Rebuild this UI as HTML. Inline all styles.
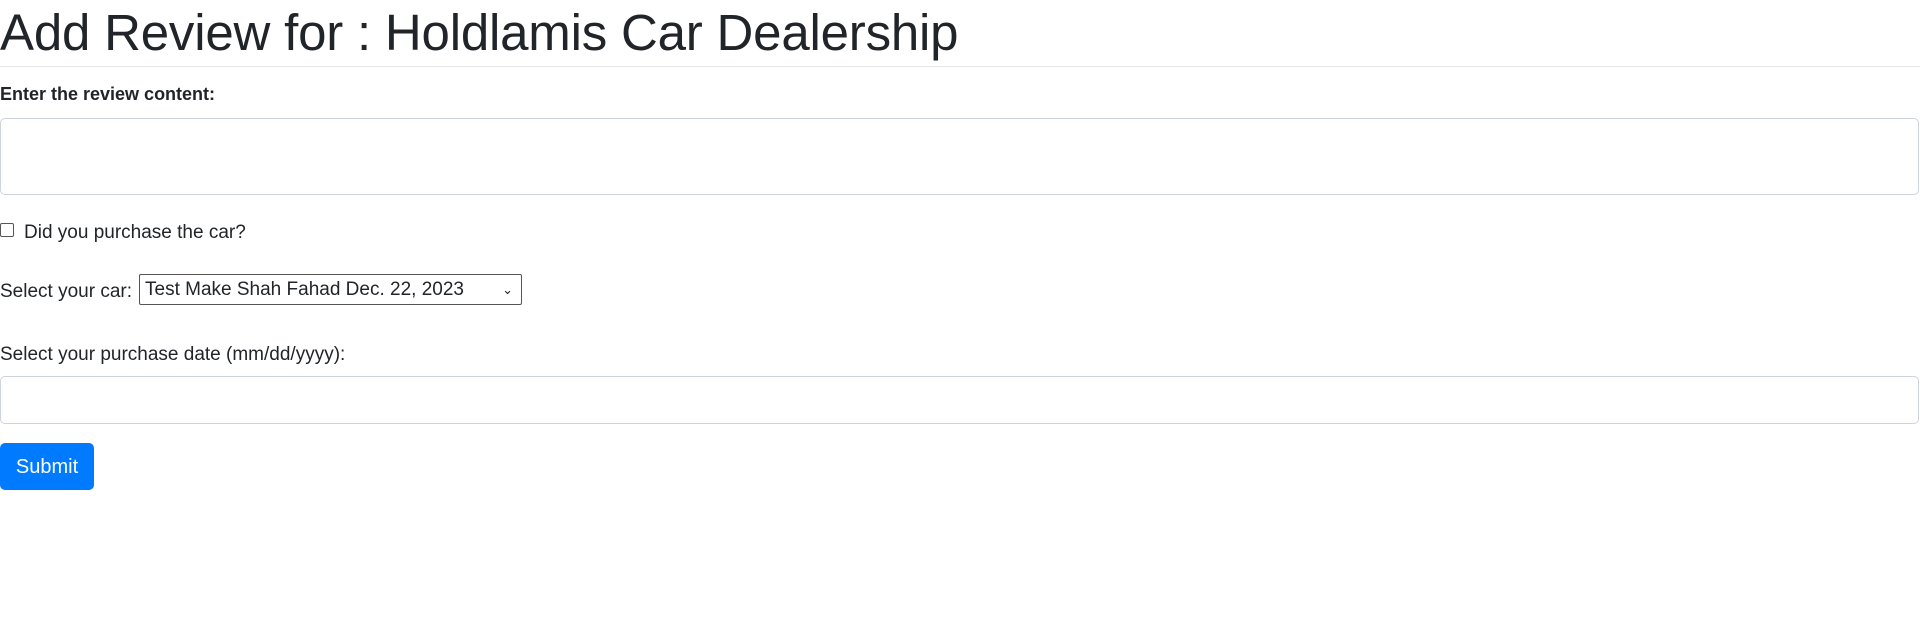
<!DOCTYPE html>
<html><head><style>
body{margin:0;font-family:"Liberation Sans",sans-serif;color:#212529;font-size:20px;background:#fff}
h1{margin:0;font-size:51px;font-weight:normal;line-height:62px;height:66px;letter-spacing:-0.2px;padding-top:2px;box-sizing:border-box}
hr{margin:0;border:0;border-top:1px solid #e5e5e5}
.lbl{position:absolute;left:0}
.box{position:absolute;left:0;width:1917px;border:1px solid #ced4da;border-radius:5px;background:#fff}
</style></head><body>
<h1>Add Review for : Holdlamis Car Dealership</h1>
<hr>
<div class="lbl" style="top:84px;font-weight:bold;font-size:18px">Enter the review content:</div>
<div class="box" style="top:118px;height:75px"></div>
<div class="lbl" style="top:222px;font-size:19px"><span style="display:inline-block;width:12px;height:12px;border:1px solid #555;border-radius:2px;vertical-align:1px;margin-right:10px"></span>Did you purchase the car?</div>
<div class="lbl" style="top:281px;font-size:19px">Select your car:</div>
<div style="position:absolute;left:139px;top:274px;width:376px;height:29px;border:1px solid #555;border-radius:2px;font-size:19px;line-height:29px;padding-left:5px;box-sizing:content-box">Test Make Shah Fahad Dec. 22, 2023<span style="position:absolute;right:8px;top:0;font-size:13px">&#8964;</span></div>
<div class="lbl" style="top:344px;font-size:19px">Select your purchase date (mm/dd/yyyy):</div>
<div class="box" style="top:376px;height:46px"></div>
<div style="position:absolute;left:0;top:443px;width:94px;height:47px;background:#007bff;border-radius:5px;color:#fff;font-size:20px;line-height:49px;text-align:center">Submit</div>
</body></html>
